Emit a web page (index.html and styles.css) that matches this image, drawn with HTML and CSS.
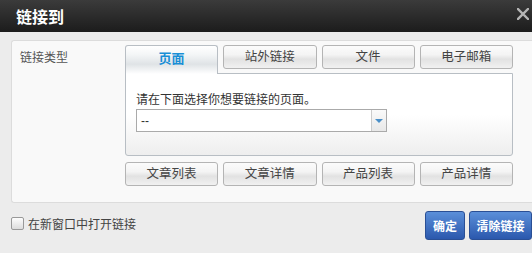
FILE: index.html
```html
<!DOCTYPE html>
<html lang="zh-CN">
<head>
    <meta charset="UTF-8">
    <title>链接到</title>
    <link rel="stylesheet" href="styles.css">
</head>
<body>

<!-- Title Bar -->
<div class="titlebar">
    <span class="title">链接到</span>
    <svg class="close" width="12" height="12" viewBox="0 0 12 12">
        <path d="M1 1 L11 11 M11 1 L1 11" stroke="#b5b5b5" stroke-width="2.4" stroke-linecap="square"/>
    </svg>
</div>

<!-- Link Type Panel -->
<div class="dialog-body">
    <div class="panel">
        <div class="field-label">链接类型</div>
        <div class="tabs-area">
            <div class="tabs">
                <div class="tab active">页面</div>
                <div class="tab">站外链接</div>
                <div class="tab">文件</div>
                <div class="tab">电子邮箱</div>
            </div>
            <div class="tab-content">
                <p class="hint">请在下面选择你想要链接的页面。</p>
                <div class="select">
                    <span class="select-value">--</span>
                    <span class="select-arrow"><span class="triangle"></span></span>
                </div>
            </div>
            <div class="tabs lower">
                <div class="tab">文章列表</div>
                <div class="tab">文章详情</div>
                <div class="tab">产品列表</div>
                <div class="tab">产品详情</div>
            </div>
        </div>
    </div>

    <!-- Footer -->
    <div class="footer">
        <label class="check">
            <span class="box"></span>
            在新窗口中打开链接
        </label>
        <div class="actions">
            <button class="btn ok">确定</button>
            <button class="btn clear">清除链接</button>
        </div>
    </div>
</div>

</body>
</html>
```

FILE: styles.css
```css
body {
    margin: 0;
    width: 532px;
    height: 253px;
    overflow: hidden;
    background-color: #ececec;
    font-family: "Liberation Sans", "Noto Sans CJK SC", sans-serif;
    font-size: 12px;
    color: #444;
}
.titlebar {
    height: 32px;
    background: linear-gradient(#3b3b3b, #1c1c1c);
    display: flex;
    align-items: center;
    justify-content: space-between;
    padding: 0 3px 0 16px;
}
.title {
    color: #fff;
    font-size: 16px;
    font-weight: bold;
}
.close {
    margin-top: -4px;
}
.dialog-body {
    padding: 8px 0 0 11px;
}
.panel {
    display: flex;
    background-color: #f9f9f9;
    border: 1px solid #dcdcdc;
    border-right: none;
    border-radius: 3px 0 0 3px;
    box-sizing: border-box;
    height: 163px;
    padding-top: 4px;
}
.field-label {
    width: 113px;
    padding: 3px 0 0 8px;
    box-sizing: border-box;
    color: #555;
}
.tabs-area {
    width: 388px;
}
.tabs {
    display: grid;
    grid-template-columns: repeat(4, 1fr);
    column-gap: 5px;
    align-items: start;
}
.tab {
    height: 24px;
    line-height: 23px;
    text-align: center;
    box-sizing: border-box;
    border: 1px solid #b4b4b4;
    border-radius: 3px;
    background: linear-gradient(#fbfbfb 0%, #f4f4f4 40%, #e2e2e2 60%, #f1f1f1 100%);
    color: #444;
    font-size: 12.5px;
}
.tab.active {
    height: 29px;
    line-height: 26px;
    border-color: #b8bec4;
    border-bottom: none;
    border-radius: 3px 3px 0 0;
    background: linear-gradient(#ffffff 0%, #f4f6f7 30%, #dfe3e6 65%, #ffffff 100%);
    color: #1a8fd6;
    font-size: 13px;
    font-weight: bold;
    position: relative;
    z-index: 1;
}
.tab-content {
    margin-top: -1px;
    height: 83px;
    box-sizing: border-box;
    border: 1px solid #b8bec4;
    border-radius: 0 0 3px 3px;
    background: linear-gradient(#ffffff 50%, #eeeeee 100%);
    padding: 19px 0 0 10px;
}
.hint {
    margin: 0 0 1px;
    color: #333;
    line-height: 15px;
}
.select {
    width: 251px;
    height: 23px;
    box-sizing: border-box;
    border: 1px solid #aaa;
    background-color: #fff;
    display: flex;
    align-items: center;
    justify-content: space-between;
}
.select-value {
    padding-left: 4px;
    color: #333;
}
.select-arrow {
    width: 14px;
    height: 100%;
    border-left: 1px solid #ccc;
    background: linear-gradient(#fafafa, #e8e8e8);
    display: flex;
    align-items: center;
    justify-content: center;
}
.triangle {
    width: 0;
    height: 0;
    border-left: 4px solid transparent;
    border-right: 4px solid transparent;
    border-top: 4px solid #4a8fc8;
}
.tabs.lower {
    margin-top: 6px;
}
.footer {
    display: flex;
    justify-content: space-between;
    align-items: center;
    margin-top: 8px;
}
.check {
    display: flex;
    align-items: center;
    gap: 4px;
    font-size: 12px;
    color: #444;
    margin-top: -4px;
}
.box {
    width: 11px;
    height: 11px;
    border: 1px solid #999;
    border-radius: 2px;
    background: linear-gradient(#fdfdfd, #dcdcdc);
}
.actions {
    display: flex;
    gap: 4px;
}
.btn {
    height: 29px;
    border: 1px solid #2a4f95;
    border-radius: 3px;
    background: linear-gradient(#5b8fd9, #2b58ad);
    color: #fff;
    font-family: inherit;
    font-size: 12px;
    font-weight: bold;
    padding: 0;
    cursor: pointer;
}
.btn.ok {
    width: 40px;
}
.btn.clear {
    width: 63px;
}
```
